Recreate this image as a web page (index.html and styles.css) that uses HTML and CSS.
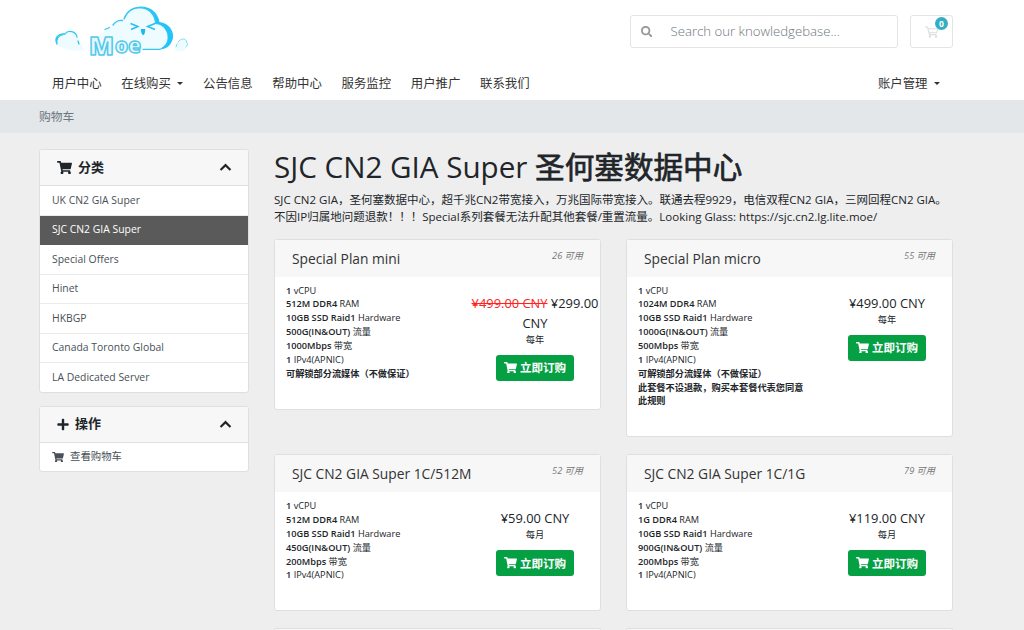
FILE: index.html
```html
<!DOCTYPE html>
<html lang="zh-CN">
<head>
<meta charset="utf-8">
<title>购物车</title>
<link rel="stylesheet" href="styles.css">
</head>
<body>
<svg class="sprite" aria-hidden="true">
  <symbol id="cart" viewBox="0 0 576 512"><path d="M528.12 301.319l47.273-208C578.806 78.301 567.391 64 551.99 64H159.208l-9.166-44.81C147.758 8.021 137.93 0 126.529 0H24C10.745 0 0 10.745 0 24v16c0 13.255 10.745 24 24 24h69.883l70.248 343.435C147.325 417.1 136 435.222 136 456c0 30.928 25.072 56 56 56s56-25.072 56-56c0-15.674-6.447-29.835-16.824-40h209.647C430.447 426.165 424 440.326 424 456c0 30.928 25.072 56 56 56s56-25.072 56-56c0-22.172-12.888-41.332-31.579-50.405l5.517-24.276c3.413-15.018-8.002-29.319-23.403-29.319H218.117l-6.545-32h293.145c11.206 0 20.92-7.754 23.403-18.681z"/></symbol>
  <symbol id="search" viewBox="0 0 512 512"><path d="M505 442.7L405.3 343c-4.5-4.5-10.6-7-17-7H372c27.6-35.3 44-79.7 44-128C416 93.1 322.9 0 208 0S0 93.1 0 208s93.1 208 208 208c48.3 0 92.7-16.4 128-44v16.3c0 6.4 2.5 12.5 7 17l99.7 99.7c9.4 9.4 24.6 9.4 33.9 0l28.3-28.3c9.4-9.4 9.4-24.6.1-34zM208 336c-70.7 0-128-57.2-128-128 0-70.7 57.2-128 128-128 70.7 0 128 57.2 128 128 0 70.7-57.2 128-128 128z"/></symbol>
  <symbol id="plus" viewBox="0 0 448 512"><path d="M416 208H272V64c0-17.67-14.33-32-32-32h-32c-17.67 0-32 14.33-32 32v144H32c-17.67 0-32 14.33-32 32v32c0 17.67 14.33 32 32 32h144v144c0 17.67 14.33 32 32 32h32c17.67 0 32-14.33 32-32V304h144c17.67 0 32-14.33 32-32v-32c0-17.67-14.33-32-32-32z"/></symbol>
  <symbol id="chevron" viewBox="0 0 12 8"><path d="M1.3 6.7 6 2l4.700 4.700" fill="none" stroke="currentColor" stroke-width="2"/></symbol>
</svg>

<header class="header">
  <div class="topbar">
    <a class="logo">
      <svg width="150" height="60" viewBox="43 0 150 60">
        <path class="puff" d="M98 38C100 33 104 30 110 28C113 22 118 20 123 21C125 12 132 7 141 7C150 8 157 14 158 22C167 23 172 30 172 37C171 45 165 50 158 50H100Z"/>
        <path class="puff" d="M57 45C53 37 59 33 65 34C68 30 75 31 78 39L85 50C76 52 65 50 57 45Z"/>
        <path class="puff" d="M174 51L180 41C184 38 187 41 187 43C188 47 185 50 183 51Z"/>
        <path class="rim" d="M139 6.500C151 6 158 13 159.500 22C169 23 174 31 173 38C171 46 166 49.500 159 49.500C166 46 169 41 167 33C165 27 160 24 155 24C155 15 149 9 139 6.500Z"/>
        <path class="edge" d="M113 25C116 21 119 20 122.500 20.500M124 19C127 11 133 7.500 140 7.500C149 8 155 14 156 23M105 29.500L109.500 27.500M143 49.300H160"/>
        <path class="edge" d="M57 44C54 38 58 33 65 34C68 29.500 76 31 77 37M63 34.500C58 36 56 39 57 44M78 41L79 44"/>
        <path class="edge thin" d="M178 42C182 37 187 39 186.500 42.500C188 43 188 45 186 47M177 44L176 47"/>
        <path class="face" d="M130.500 23.500L138 26.500 131 29.500M155 23.500L147.500 26.500 155 29.500"/>
        <path class="mouth" d="M140.800 29H145.200C145.200 33.500 144 35.200 143 35.200C141.500 34.500 140.800 31 140.800 29Z"/>
        <text class="logo-m" x="89" y="55" textLength="25" lengthAdjust="spacingAndGlyphs">M</text>
        <text class="logo-oe" x="115" y="52.500" textLength="26" lengthAdjust="spacingAndGlyphs">oe</text>
      </svg>
    </a>
    <div class="search">
      <svg class="search-icon"><use href="#search"/></svg>
      <span>Search our knowledgebase...</span>
    </div>
    <a class="cart-btn">
      <svg width="14" height="12" viewBox="0 0 14 12"><path d="M0 1H2.500L4.500 8.600H11.500M3 2.800H12.800L11.500 6.800H4.100" fill="none" stroke="currentColor" stroke-width="1.100"/><circle cx="5" cy="10.500" r="1.200"/><circle cx="11" cy="10.500" r="1.200"/></svg>
      <span class="badge">0</span>
    </a>
  </div>
  <nav class="nav">
    <a>用户中心</a>
    <a class="caret">在线购买</a>
    <a>公告信息</a>
    <a>帮助中心</a>
    <a>服务监控</a>
    <a>用户推广</a>
    <a>联系我们</a>
    <a class="caret account">账户管理</a>
  </nav>
</header>

<div class="breadcrumb">购物车</div>

<div class="page">
  <aside class="sidebar">
    <section class="panel">
      <h3 class="panel-head"><svg class="head-cart"><use href="#cart"/></svg><span>分类</span><svg class="chevron"><use href="#chevron"/></svg></h3>
      <a class="item">UK CN2 GIA Super</a>
      <a class="item active">SJC CN2 GIA Super</a>
      <a class="item">Special Offers</a>
      <a class="item">Hinet</a>
      <a class="item">HKBGP</a>
      <a class="item">Canada Toronto Global</a>
      <a class="item">LA Dedicated Server</a>
    </section>
    <section class="panel">
      <h3 class="panel-head"><svg class="head-plus"><use href="#plus"/></svg><span>操作</span><svg class="chevron"><use href="#chevron"/></svg></h3>
      <a class="item"><svg class="item-cart"><use href="#cart"/></svg>查看购物车</a>
    </section>
  </aside>

  <main class="main">
    <h1>SJC CN2 GIA Super <b>圣何塞数据中心</b></h1>
    <p class="tagline">SJC CN2 GIA，圣何塞数据中心，超千兆CN2带宽接入，万兆国际带宽接入。联通去程9929，电信双程CN2 GIA，三网回程CN2 GIA。<br>不因IP归属地问题退款！！！Special系列套餐无法升配其他套餐/重置流量。Looking Glass: https://sjc.cn2.lg.lite.moe/</p>

    <div class="products">
      <article class="product">
        <header><h2>Special Plan mini</h2><i>26 可用</i></header>
        <div class="body">
          <div class="specs"><b>1</b> vCPU<br><b>512M DDR4</b> RAM<br><b>10GB SSD Raid1</b> Hardware<br><b>500G(IN&amp;OUT)</b> 流量<br><b>1000Mbps</b> 带宽<br><b>1</b> IPv4(APNIC)<br><b>可解锁部分流媒体（不做保证）</b></div>
          <div class="buy"><div class="price"><del>¥499.00 CNY</del> ¥299.00 CNY</div><small>每年</small><a class="order"><svg><use href="#cart"/></svg>立即订购</a></div>
        </div>
      </article>
      <article class="product">
        <header><h2>Special Plan micro</h2><i>55 可用</i></header>
        <div class="body">
          <div class="specs"><b>1</b> vCPU<br><b>1024M DDR4</b> RAM<br><b>10GB SSD Raid1</b> Hardware<br><b>1000G(IN&amp;OUT)</b> 流量<br><b>500Mbps</b> 带宽<br><b>1</b> IPv4(APNIC)<br><b>可解锁部分流媒体（不做保证）</b><br><b>此套餐不设退款，购买本套餐代表您同意此规则</b></div>
          <div class="buy"><div class="price">¥499.00 CNY</div><small>每年</small><a class="order"><svg><use href="#cart"/></svg>立即订购</a></div>
        </div>
      </article>
      <article class="product">
        <header><h2>SJC CN2 GIA Super 1C/512M</h2><i>52 可用</i></header>
        <div class="body">
          <div class="specs"><b>1</b> vCPU<br><b>512M DDR4</b> RAM<br><b>10GB SSD Raid1</b> Hardware<br><b>450G(IN&amp;OUT)</b> 流量<br><b>200Mbps</b> 带宽<br><b>1</b> IPv4(APNIC)</div>
          <div class="buy"><div class="price">¥59.00 CNY</div><small>每月</small><a class="order"><svg><use href="#cart"/></svg>立即订购</a></div>
        </div>
      </article>
      <article class="product">
        <header><h2>SJC CN2 GIA Super 1C/1G</h2><i>79 可用</i></header>
        <div class="body">
          <div class="specs"><b>1</b> vCPU<br><b>1G DDR4</b> RAM<br><b>10GB SSD Raid1</b> Hardware<br><b>900G(IN&amp;OUT)</b> 流量<br><b>200Mbps</b> 带宽<br><b>1</b> IPv4(APNIC)</div>
          <div class="buy"><div class="price">¥119.00 CNY</div><small>每月</small><a class="order"><svg><use href="#cart"/></svg>立即订购</a></div>
        </div>
      </article>
      <article class="product next"></article>
      <article class="product next"></article>
    </div>
  </main>
</div>
</body>
</html>
```
FILE: styles.css
```css
* { box-sizing: border-box; }
html, body { height: 630px; overflow: hidden; }
body {
  margin: 0;
  background: #eee;
  color: #212529;
  font: 11.5px/17.3px "Open Sans", "Noto Sans CJK SC", sans-serif;
}
svg { fill: currentColor; flex: none; }
.sprite { position: absolute; width: 0; height: 0; }
b { font-weight: 600; }

.header { height: 100px; background: #fff; }
.topbar { display: flex; height: 62px; padding-left: 43px; }
.logo { width: 586.500px; height: 60px; }
.logo svg { display: block; overflow: visible; }
.puff { fill: #effcff; }
.rim { fill: #25c4f8; }
.edge { fill: none; stroke: #35c5f3; stroke-width: 1.3; stroke-linecap: round; }
.thin { stroke-width: .9; stroke: #6ad3f2; }
.face { fill: none; stroke: #25bdf0; stroke-width: 1.4; }
.mouth { fill: #1db8f0; }
.logo-m, .logo-oe {
  font-family: "Open Sans", sans-serif;
  font-weight: 800;
  fill: #e4f9ff;
  stroke: #55c9ea;
  stroke-width: 1.5;
  stroke-linejoin: round;
}
.logo-m { font-size: 25px; }
.logo-oe { font-size: 21px; }

.search {
  display: flex;
  align-items: center;
  width: 268px;
  height: 33px;
  margin-top: 15px;
  padding-left: 10px;
  border: 1px solid #e4e4e4;
  border-radius: 3px;
  color: #6c757d;
  font-size: 13.2px;
  font-weight: 300;
}
.search-icon { width: 11.5px; height: 11.5px; margin-right: 18.5px; fill: #999; }
.cart-btn {
  position: relative;
  display: flex;
  align-items: center;
  justify-content: center;
  width: 43px;
  height: 33px;
  margin: 15px 0 0 12.500px;
  border: 1px solid #e4e4e4;
  border-radius: 3px;
  color: #ddd;
}
.badge {
  position: absolute;
  top: 1px;
  left: 24px;
  width: 13px;
  height: 13px;
  border-radius: 50%;
  background: #33afc3;
  color: #fff;
  font-size: 8.5px;
  font-weight: 700;
  line-height: 13px;
  text-align: center;
}

.nav {
  display: flex;
  gap: 19.700px;
  height: 38px;
  padding: 12px 84px 0 52px;
  color: #333;
  font-size: 12.4px;
  line-height: 20px;
}
.caret { display: flex; align-items: center; }
.caret::after {
  content: "";
  margin: 0 0 1px 6.500px;
  border: 3.500px solid transparent;
  border-top-color: currentColor;
  border-bottom: 0;
}
.account { margin-left: auto; }
.nav .caret { height: 20px; }

.breadcrumb {
  height: 33px;
  padding-left: 39px;
  background: #e3e7ea;
  color: #6c757d;
  font-size: 11.8px;
  line-height: 32px;
}

.page { display: flex; gap: 25px; padding: 16px 71px 0 39px; }
.sidebar { width: 210px; flex: none; }
.panel {
  margin-bottom: 13px;
  border: 1px solid #dfdfdf;
  border-radius: 3px;
  background: #fff;
  overflow: hidden;
}
.panel-head {
  display: flex;
  align-items: center;
  height: 36px;
  margin: 0;
  padding: 0 16px 0 17px;
  border-bottom: 1px solid #dfdfdf;
  background: #f7f7f7;
  font-size: 13px;
  font-weight: 600;
}
.head-cart { width: 15px; height: 13.300px; margin-right: 6px; }
.head-plus { width: 12px; height: 13px; margin-right: 6px; }
.chevron { width: 13px; height: 8.500px; margin-left: auto; }
.item {
  display: flex;
  align-items: center;
  height: 29.500px;
  padding: 0 12px;
  border-bottom: 1px solid #ebebeb;
  color: #495057;
  font-size: 10.4px;
}
.item:last-child { height: 28.500px; border-bottom: 0; }
.item.active { background: #5a5a5a; border-color: #5a5a5a; color: #fff; }
.item-cart { width: 12px; height: 10.500px; margin-right: 6px; }

.main { width: 679px; }
h1 { margin: 0; font-size: 29.600px; font-weight: 400; line-height: 36px; white-space: nowrap; }
h1 b { font-weight: 400; -webkit-text-stroke: .7px currentColor; }
.tagline { margin: 6px 0 13px; white-space: nowrap; }

.products {
  display: grid;
  grid-template-columns: 327px 327px;
  gap: 17px 25px;
  align-items: start;
}
.product {
  min-height: 157px;
  border: 1px solid #dfdfdf;
  border-radius: 3px;
  background: #fff;
}
.product.next { min-height: 2px; height: 2px; border-radius: 3px 3px 0 0; border-bottom: 0; background: #f7f7f7; }
.product header {
  display: flex;
  justify-content: space-between;
  height: 37px;
  padding: 0 17px;
  background: #f7f7f7;
}
h2 { margin: 0; color: #333; font-size: 13.800px; font-weight: 400; line-height: 38px; }
header i { color: #777; font-size: 9.200px; line-height: 31px; }
.body { display: flex; justify-content: space-between; padding: 7px 0 28px 11px; }
.specs { width: 170px; font-size: 9.200px; line-height: 13.850px; }
.buy { display: flex; flex-direction: column; align-items: center; width: 130px; padding-top: 9px; }
.price { font-size: 12.900px; line-height: 20px; text-align: center; }
del { color: #f22; }
.buy small { font-size: 9.200px; line-height: 14px; }
.order {
  display: flex;
  align-items: center;
  gap: 3px;
  height: 26px;
  margin-top: 8px;
  padding: 0 8px;
  border-radius: 3px;
  background: #05a044;
  color: #fff;
  font-size: 11.500px;
  font-weight: 600;
}
.order svg { width: 13px; height: 11.500px; }
```
